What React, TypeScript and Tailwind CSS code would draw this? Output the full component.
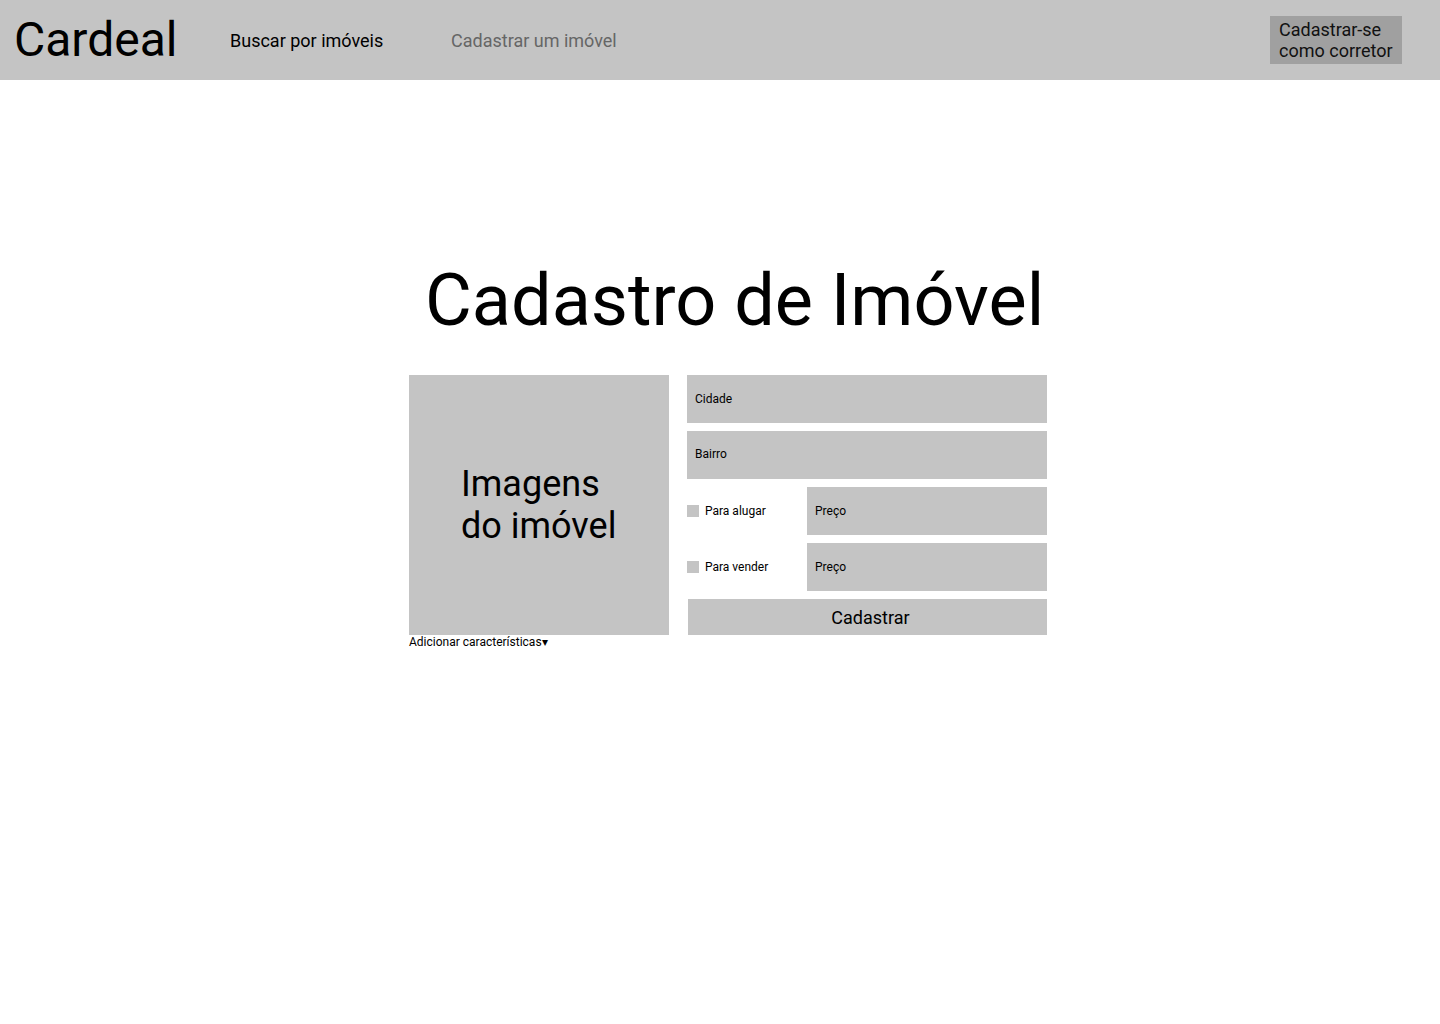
import React from "react";

export default function App() {
  const font = { fontFamily: "Roboto, 'Noto Sans', sans-serif" };
  return (
    <div className="min-h-[1024px] bg-white text-black" style={font}>
      <header className="h-[80px] bg-[#c4c4c4] flex items-center relative">
        <div className="ml-[14px] text-[48px] leading-[56px] w-[216px]">Cardeal</div>
        <nav className="flex items-center text-[18px] leading-[21px]">
          <a className="w-[221px]">Buscar por imóveis</a>
          <a className="text-[#666666]">Cadastrar um imóvel</a>
        </nav>
        <div className="ml-auto mr-[38px] w-[132px] h-[48px] bg-[#a0a0a0] pl-[9px] pt-[3px] text-[18px] leading-[21px] text-[#111]">
          Cadastrar-se
          <br />
          como corretor
        </div>
      </header>

      <main className="ml-[409px] w-[638px]">
        <h1 className="mt-[179px] pl-[16px] text-[72px] leading-[84px] font-normal whitespace-nowrap">
          Cadastro de Imóvel
        </h1>
        <div className="mt-[32px] flex">
          <div className="w-[260px]">
            <div className="h-[260px] bg-[#c4c4c4] flex items-center pl-[52px] text-[36px] leading-[42px]">
              <div>
                Imagens
                <br />
                do imóvel
              </div>
            </div>
            <div className="text-[12px] leading-[14px] whitespace-nowrap">Adicionar características▾</div>
          </div>
          <div className="ml-[18px] w-[360px] flex flex-col gap-[8px]">
            <div className="h-[48px] bg-[#c4c4c4] flex items-center pl-[8px] text-[12px]">Cidade</div>
            <div className="h-[48px] bg-[#c4c4c4] flex items-center pl-[8px] pb-[2px] text-[12px]">Bairro</div>
            <div className="h-[48px] flex items-center">
              <div className="w-[120px] flex items-center text-[12px]">
                <span className="w-[12px] h-[12px] bg-[#c4c4c4] mr-[6px]"></span>
                Para alugar
              </div>
              <div className="flex-1 h-full bg-[#c4c4c4] flex items-center pl-[8px] text-[12px]">Preço</div>
            </div>
            <div className="h-[48px] flex items-center">
              <div className="w-[120px] flex items-center text-[12px]">
                <span className="w-[12px] h-[12px] bg-[#c4c4c4] mr-[6px]"></span>
                Para vender
              </div>
              <div className="flex-1 h-full bg-[#c4c4c4] flex items-center pl-[8px] text-[12px]">Preço</div>
            </div>
            <div className="ml-[1px] h-[36px] bg-[#c4c4c4] flex items-center justify-center pl-[6px] text-[18px]">
              Cadastrar
            </div>
          </div>
        </div>
      </main>
    </div>
  );
}
